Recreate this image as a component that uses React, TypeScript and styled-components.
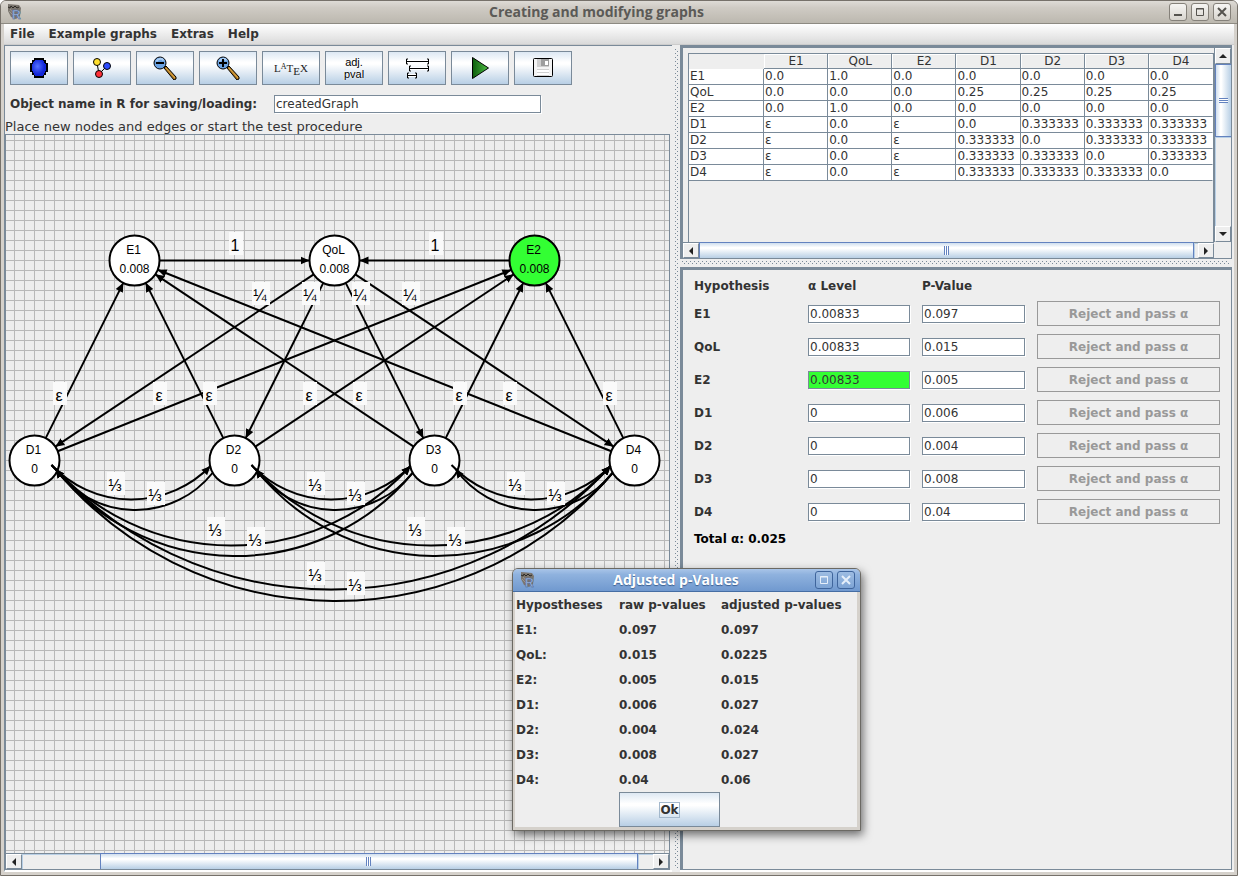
import React from "react";
import styled, { createGlobalStyle, css } from "styled-components";

const LINE = "#7a8a99";
const PANEL = "#eeeeee";
const INK = "#333333";
const buttonFace = "linear-gradient(#dde8f3 0%, #ffffff 32%, #ffffff 38%, #b8cfe5 100%)";

const GlobalStyle = createGlobalStyle`
  * { box-sizing: border-box; }
  body {
    margin: 0;
    background: #ffffff;
    color: ${INK};
    font: 12px/16px "DejaVu Sans", sans-serif;
  }
  button, input { font: inherit; color: inherit; }
`;

/* ---------- window frame ---------- */

const Frame = styled.div`
  position: relative;
  display: flex;
  flex-direction: column;
  min-height: 100vh;
  border: 1px solid #76716a;
  border-radius: 6px 6px 0 0;
  background: #d5d1cb;
`;

const TitleBar = styled.header`
  display: flex;
  align-items: center;
  height: 23px;
  padding: 0 6px 0 5px;
  border-bottom: 1px solid #8d8a82;
  border-radius: 5px 5px 0 0;
  background: linear-gradient(#dedbd6, #cfcbc4 30%, #bcb8af);
`;

const TitleText = styled.h1`
  flex: 1;
  margin: 0;
  text-align: center;
  font: bold 14px/20px "Open Sans", sans-serif;
  color: #5b5a57;
`;

const TitleButtons = styled.div`
  display: flex;
  gap: 4px;
`;

const TitleButton = styled.button`
  display: grid;
  place-items: center;
  width: 18px;
  height: 18px;
  padding: 0;
  border: 1px solid #85817a;
  border-radius: 3px;
  background: linear-gradient(#f6f5f3, #d8d5cf);
`;

const Body = styled.div`
  flex: 1;
  display: flex;
  flex-direction: column;
  margin: 0 3px 3px;
  background: ${PANEL};
`;

const MenuBar = styled.nav`
  display: flex;
  gap: 14px;
  height: 21px;
  padding: 0 6px;
  border-bottom: 1px solid #cccccc;
  background: linear-gradient(#ffffff, #dadada);
`;

const MenuItem = styled.button`
  padding: 0;
  border: 0;
  background: none;
  font-weight: bold;
  line-height: 19px;
`;

const Split = styled.main`
  flex: 1;
  display: grid;
  grid-template-columns: minmax(0, 668fr) 8px minmax(0, 554fr);
`;

const Divider = styled.div<{ $horizontal?: boolean }>`
  ${(p) => (p.$horizontal ? css`height: 8px; padding: 2px;` : css`padding: 4px 2px 4px 3px;`)}
  background:
    conic-gradient(from 270deg at 1px 1px, ${LINE} 90deg, transparent 0) 0 0 / 4px 4px content-box,
    conic-gradient(from 270deg at 1px 1px, ${LINE} 90deg, transparent 0) 2px 2px / 4px 4px content-box;
`;

/* ---------- left side ---------- */

const LeftPane = styled.section`
  display: flex;
  flex-direction: column;
  padding-right: 2px;
  border-top: 1px solid ${LINE};
  border-left: 1px solid ${LINE};
  border-bottom: 2px solid #ffffff;
`;

const Toolbar = styled.div`
  display: flex;
  gap: 5px;
  padding: 5px 5px 10px;
`;

const ToolButton = styled.button`
  display: grid;
  place-items: center;
  width: 58px;
  height: 34px;
  padding: 0;
  border: 1px solid ${LINE};
  background: ${buttonFace};
`;

const TwoLineCaption = styled.span`
  font: 11px/12px "Liberation Sans", sans-serif;
  color: #000000;
  text-shadow: 0 0 1px #ffffff, 0 0 2px #ffffff;
`;

const NameRow = styled.div`
  display: grid;
  grid-template-columns: 258px 267px;
  gap: 6px;
  padding: 0 5px 6px;
`;

const BoldLabel = styled.label`
  font-weight: bold;
  line-height: 18px;
  white-space: nowrap;
`;

const Field = styled.input<{ $rejectable?: boolean }>`
  width: 100%;
  height: 18px;
  padding: 0 1px;
  border: 1px solid ${LINE};
  border-radius: 0;
  background: ${(p) => (p.$rejectable ? "#33ff33" : "#ffffff")};
  box-shadow: 1px 1px 0 #ffffff;
`;

const Status = styled.p`
  margin: 0;
  font-size: 13px;
  line-height: 15px;
`;

const CanvasPane = styled.div`
  flex: 1;
  display: flex;
  flex-direction: column;
  border: 1px solid ${LINE};
`;

const Canvas = styled.div`
  flex: 1;
  min-height: 500px;
  overflow: hidden;
  background:
    linear-gradient(90deg, #b9b9b9 1px, transparent 1px) 8px 0 / 10px 10px,
    linear-gradient(#b9b9b9 1px, transparent 1px) 0 5px / 10px 10px,
    ${PANEL};
  svg { display: block; width: 100%; height: 100%; }
`;

/* ---------- scroll bars ---------- */

const Bar = styled.div<{ $vertical?: boolean }>`
  display: flex;
  flex-direction: ${(p) => (p.$vertical ? "column" : "row")};
  ${(p) => (p.$vertical ? css`border-left: 1px solid ${LINE};` : css`height: 16px; border-top: 1px solid ${LINE};`)}
  background: ${PANEL};
`;

const BarButton = styled.button`
  display: grid;
  place-items: center;
  flex: 0 0 16px;
  min-width: 0;
  padding: 0;
  border: 1px solid #ffffff;
  border-color: #ffffff ${LINE} ${LINE} #ffffff;
  background: ${PANEL};
`;

const Gap = styled.div<{ $grow: number }>`
  flex: ${(p) => p.$grow} 1 0;
  box-shadow: inset 1px 1px 0 #b8cfe5;
`;

const Thumb = styled.div<{ $grow: number; $vertical?: boolean }>`
  flex: ${(p) => p.$grow} 1 0;
  display: grid;
  place-items: center;
  border: 1px solid #6382bf;
  ${(p) =>
    p.$vertical
      ? css`border-right: 0; background: linear-gradient(90deg, #cfdeee, #ffffff 30%, #ffffff 36%, #b8cfe5);`
      : css`border-bottom: 0; margin-top: -1px; background: linear-gradient(#cfdeee, #ffffff 30%, #ffffff 36%, #b8cfe5);`}
`;

const Grip = styled.span<{ $vertical?: boolean }>`
  ${(p) => (p.$vertical ? css`width: 9px; height: 5px;` : css`width: 5px; height: 9px;`)}
  background: repeating-linear-gradient(${(p) => (p.$vertical ? "180deg" : "90deg")}, #6382bf 0 1px, #ffffff 1px 2px);
`;

type Direction = "left" | "right" | "up" | "down";
const arrowShapes: Record<Direction, string> = {
  left: "M6 0v8L2 4z",
  right: "M2 0v8l4-4z",
  up: "M0 6h8L4 2z",
  down: "M0 2h8L4 6z",
};

const Arrow = ({ to }: { to: Direction }) => (
  <svg width="8" height="8" aria-hidden="true">
    <path d={arrowShapes[to]} fill="#222" />
  </svg>
);

function ScrollBar({ vertical, parts }: { vertical?: boolean; parts: [number, number, number] }) {
  return (
    <Bar $vertical={vertical}>
      <BarButton aria-label={vertical ? "Scroll up" : "Scroll left"}>
        <Arrow to={vertical ? "up" : "left"} />
      </BarButton>
      <Gap $grow={parts[0]} />
      <Thumb $grow={parts[1]} $vertical={vertical}>
        <Grip $vertical={vertical} />
      </Thumb>
      <Gap $grow={parts[2]} />
      <BarButton aria-label={vertical ? "Scroll down" : "Scroll right"}>
        <Arrow to={vertical ? "down" : "right"} />
      </BarButton>
    </Bar>
  );
}

/* ---------- right side ---------- */

const RightPane = styled.div`
  display: flex;
  flex-direction: column;
  padding-right: 2px;
  border-bottom: 2px solid #ffffff;
`;

const MatrixPane = styled.section`
  display: grid;
  grid-template-columns: minmax(0, 1fr) 17px;
  grid-template-rows: 194px 16px;
  border: 1px solid ${LINE};
  border-width: 3px 1px 1px 3px;
`;

const MatrixView = styled.div`
  margin: 5px 0 0 5px;
  overflow: hidden;
  border: 1px solid ${LINE};
  border-width: 1px 1px 0 1px;
`;

const MatrixTable = styled.table`
  width: 100%;
  table-layout: fixed;
  border-collapse: separate;
  border-spacing: 0;
  th, td {
    height: 16px;
    padding: 0 0 0 1px;
    border-right: 1px solid ${LINE};
    border-bottom: 1px solid ${LINE};
    font-weight: normal;
    line-height: 15px;
    text-align: left;
    white-space: nowrap;
    overflow: hidden;
  }
  tbody th, td { background: #ffffff; }
  thead th { height: 15px; line-height: 14px; text-align: center; box-shadow: inset 1px 1px 0 #ffffff; }
  thead td { height: 15px; border-color: transparent; background: none; }
  th:last-child, td:last-child { border-right-color: transparent; }
`;

const FirstColumn = styled.col`
  width: 75px;
`;

const HypothesisPane = styled.section`
  flex: 1;
  padding: 4px 11px;
  border: 1px solid ${LINE};
  border-width: 3px 1px 1px 3px;
`;

const HypothesisRow = styled.div<{ $head?: boolean }>`
  display: grid;
  grid-template-columns: 102px 102px 103px minmax(0, 1fr);
  gap: 12px;
  align-items: center;
  height: ${(p) => (p.$head ? "23px" : "33px")};
  font-weight: ${(p) => (p.$head ? "bold" : "normal")};
`;

const RejectButton = styled.button`
  height: 25px;
  padding: 0;
  border: 1px solid #999999;
  background: ${PANEL};
  font-weight: bold;
  &:disabled { color: #999999; }
`;

const Total = styled.p`
  margin: 0;
  font-weight: bold;
  line-height: 23px;
  color: #000000;
`;

/* ---------- dialog ---------- */

const Dialog = styled.section`
  position: absolute;
  left: 511px;
  top: 567px;
  width: 349px;
  border: 1px solid #6b6963;
  border-radius: 6px 6px 0 0;
  background: #d5d1cb;
  box-shadow: 2px 4px 10px rgba(0, 0, 0, 0.55);
`;

const DialogTitle = styled.header`
  display: flex;
  align-items: center;
  height: 23px;
  padding: 0 5px 0 6px;
  border-bottom: 1px solid #456da3;
  border-radius: 5px 5px 0 0;
  background: linear-gradient(#a9c5e8, #8fb2de 25%, #7099cf);
`;

const DialogTitleText = styled.h2`
  flex: 1;
  margin: 0;
  text-align: center;
  font: bold 14px/20px "Open Sans", sans-serif;
  color: #ffffff;
  text-shadow: 0 1px 1px #3c5f90;
`;

const DialogButton = styled(TitleButton)`
  border-color: #3f659c;
  background: linear-gradient(#9dbce2, #7ea4d5);
`;

const DialogBody = styled.div`
  margin: 0 3px 3px 2px;
  background: ${PANEL};
`;

const ResultTable = styled.table`
  width: 100%;
  table-layout: fixed;
  border-collapse: collapse;
  th, td {
    height: 25px;
    padding: 0 1px;
    font-weight: bold;
    text-align: left;
    white-space: nowrap;
  }
`;

const ResultColumn = styled.col<{ $width?: number }>`
  width: ${(p) => (p.$width ? `${p.$width}px` : "auto")};
`;

const OkButton = styled.button`
  display: block;
  width: 101px;
  height: 35px;
  margin-left: 104px;
  border: 1px solid ${LINE};
  background: ${buttonFace};
  font-weight: bold;
  span { border: 1px solid #a3b8cc; }
`;

/* ---------- icons ---------- */

const AppIcon = () => (
  <svg width="18" height="18" viewBox="0 0 18 18" aria-hidden="true">
    <path d="M2 1l11 1 2 3-1 8-4 3-5-2-3-6z" fill="#7a756e" />
    <path d="M2 4l2 1 1-2 2 2 2-2 2 2 2-1" fill="none" stroke="#2c2925" />
    <path d="M3 8l5 5M4 6l6 7" stroke="#9a948c" />
    <text x="6" y="16" fontFamily="Liberation Sans, sans-serif" fontWeight="bold" fontSize="12" fill="#9db5dd" stroke="#46608f" strokeWidth="0.5">R</text>
  </svg>
);

const NodeIcon = () => (
  <svg width="20" height="22" viewBox="0 0 20 22" aria-hidden="true">
    <defs>
      <radialGradient id="blueBall" cx="40%" cy="40%">
        <stop offset="0" stopColor="#5572ff" />
        <stop offset="1" stopColor="#1226d8" />
      </radialGradient>
    </defs>
    <path d="M5 1h10v2h2v3h2v9h-2v3h-2v3H5v-3H3v-3H1V6h2V3h2z" fill="#000" />
    <path d="M6 3h8v1h1v2h1v1h1v7h-1v2h-1v2h-1v1H6v-1H5v-2H4v-2H3V7h1V5h1V4h1z" fill="url(#blueBall)" />
  </svg>
);

const EdgeIcon = () => (
  <svg width="24" height="24" viewBox="0 0 24 24" aria-hidden="true">
    <path d="M7 7l2 11 8-8" fill="none" stroke="#000" />
    <circle cx="7" cy="6" r="3.5" fill="#ffdf2e" stroke="#000" />
    <circle cx="17" cy="10" r="3.5" fill="#2d4cff" stroke="#000" />
    <circle cx="9" cy="18" r="3.5" fill="#ff3038" stroke="#000" />
  </svg>
);

const ZoomIcon = ({ plus }: { plus?: boolean }) => (
  <svg width="24" height="24" viewBox="0 0 24 24" aria-hidden="true">
    <path d="M11 12l2-2 10 11v2l-2 1z" fill="#b07a1e" stroke="#000" />
    <path d="M13 12l9 10" stroke="#e0ab4e" />
    <circle cx="7" cy="7" r="6" fill="#6ba3e3" stroke="#000" />
    <path d="M3.500 5.500a4 4 0 0 1 7-1" fill="none" stroke="#a9cdf4" strokeWidth="2" />
    <path d={plus ? "M3 7h8M7 3v8" : "M3 7h8"} stroke="#000" strokeWidth="2" />
  </svg>
);

const LatexIcon = () => (
  <svg width="34" height="22" viewBox="0 0 34 22" fontFamily="Liberation Serif, serif" fill="#222" aria-label="LaTeX">
    <text x="17" y="15" fontSize="11" textAnchor="middle">
      L<tspan fontSize="8" dy="-3">A</tspan><tspan dy="3">T</tspan><tspan dy="3">E</tspan><tspan dy="-3">X</tspan>
    </text>
  </svg>
);

const IntervalsIcon = () => (
  <svg width="24" height="22" viewBox="0 0 24 22" fill="none" aria-hidden="true">
    <g stroke="#fff" strokeWidth="3">
      <path d="M1 4.500h22M4 11.500h19M2 18.500h10" />
    </g>
    <path d="M3 2H1.500v5H3M22 2h1.500v5H22M2 4.500h21M6 9H4.500v5H6M22 9h1.500v5H22M5 11.500h18M4 16H2.500v5H4M10 16h1.500v5H10M3 18.500h8" stroke="#000" />
  </svg>
);

const PlayIcon = () => (
  <svg width="20" height="24" viewBox="0 0 20 24" aria-hidden="true">
    <defs>
      <linearGradient id="playFace">
        <stop offset="0" stopColor="#0b5c0b" />
        <stop offset="1" stopColor="#4fbf45" />
      </linearGradient>
    </defs>
    <path d="M2.500 1.500v21l16-10.500z" fill="url(#playFace)" stroke="#000" />
  </svg>
);

const DiskIcon = () => (
  <svg width="20" height="20" viewBox="0 0 20 20" aria-hidden="true">
    <rect x="0.500" y="0.500" width="19" height="18" rx="1" fill="#f4f4f4" stroke="#000" />
    <path d="M4 1h12v8H4z" fill="#cfcfcf" />
    <path d="M8 1h8v7H8z" fill="#9e9e9e" />
    <path d="M12 3h3v4h-3z" fill="#fff" />
    <path d="M4 11h12v7H4z" fill="#fff" />
    <path d="M4 11.500h12M4 14.500h12M4 17.500h12" stroke="#d0d0d0" />
  </svg>
);

const MinimizeGlyph = () => (
  <svg width="10" height="10" aria-hidden="true"><path d="M1 8h8" stroke="#55534f" strokeWidth="2" /></svg>
);
const MaximizeGlyph = ({ color = "#55534f" }: { color?: string }) => (
  <svg width="10" height="10" aria-hidden="true">
    <path d="M1.500 1.500h7v7h-7zM1 2h8" fill="none" stroke={color} />
  </svg>
);
const CloseGlyph = ({ color = "#55534f" }: { color?: string }) => (
  <svg width="10" height="10" aria-hidden="true"><path d="M1 1l8 8M9 1L1 9" stroke={color} strokeWidth="2" /></svg>
);

/* ---------- graph ---------- */

type Point = [number, number];

const nodes: Record<string, { at: Point; weight: string; rejectable?: boolean }> = {
  E1: { at: [128.5, 125.5], weight: "0.008" },
  QoL: { at: [328.5, 125.5], weight: "0.008" },
  E2: { at: [528.5, 125.5], weight: "0.008", rejectable: true },
  D1: { at: [28.5, 325.5], weight: "0" },
  D2: { at: [228.5, 325.5], weight: "0" },
  D3: { at: [428.5, 325.5], weight: "0" },
  D4: { at: [628.5, 325.5], weight: "0" },
};

/* from, to, label text, label centre */
const straightEdges: [string, string, string, number, number][] = [
  ["E1", "QoL", "1", 230, 109],
  ["E2", "QoL", "1", 430, 109],
  ["QoL", "D1", "¼", 255, 159],
  ["QoL", "D2", "¼", 305, 159],
  ["QoL", "D3", "¼", 355, 159],
  ["QoL", "D4", "¼", 405, 159],
  ["D1", "E1", "ε", 54, 259],
  ["D1", "E2", "ε", 154, 259],
  ["D2", "E1", "ε", 204, 259],
  ["D2", "E2", "ε", 304, 259],
  ["D3", "E1", "ε", 354, 259],
  ["D3", "E2", "ε", 454, 259],
  ["D4", "E1", "ε", 504, 259],
  ["D4", "E2", "ε", 604, 259],
];

const lower = ["D1", "D2", "D3", "D4"];
/* depth of the forward and backward arc for spans of one, two and three nodes */
const depths: Point[] = [[34, 39], [80, 85], [124, 130]];

const arcPairs = lower.flatMap((a, i) =>
  lower.slice(i + 1).map((b, k) => ({ a, b, depth: depths[k], left: nodes[a].at[0], right: nodes[b].at[0], span: k }))
);

function line(from: Point, to: Point) {
  const dx = to[0] - from[0];
  const dy = to[1] - from[1];
  const d = Math.hypot(dx, dy);
  const ux = (dx / d) * 25;
  const uy = (dy / d) * 25;
  return `M${from[0] + ux} ${from[1] + uy}L${to[0] - ux} ${to[1] - uy}`;
}

function arc(from: Point, to: Point, depth: number, sweep: number) {
  const half = Math.hypot(to[0] - from[0], to[1] - from[1]) / 2;
  const r = (half * half + depth * depth) / (2 * depth);
  return `M${from[0]} ${from[1]}A${r} ${r} 0 0 ${sweep} ${to[0]} ${to[1]}`;
}

const EdgeLabel = ({ text, x, y }: { text: string; x: number; y: number }) => {
  const w = text === "1" || text === "ε" ? 14 : 18;
  return (
    <g>
      <rect x={x - w / 2} y={y - 12} width={w} height="23" fill="#fafafa" />
      <text x={x - 1} y={y + 7} textAnchor="middle" fontSize="16">{text}</text>
    </g>
  );
};

const Graph = () => (
  <svg fontFamily="Liberation Sans, sans-serif" fill="#000" role="img" aria-label="Hypothesis graph">
    <defs>
      <marker id="head" markerUnits="userSpaceOnUse" markerWidth="9" markerHeight="9" refX="9" refY="4.500" orient="auto">
        <path d="M0 0.500L9 4.500L0 8.500z" />
      </marker>
    </defs>
    {Object.entries(nodes).map(([name, n]) => (
      <g key={name} textAnchor="middle" fontSize="12">
        <circle cx={n.at[0]} cy={n.at[1]} r="25" fill={n.rejectable ? "#33ff33" : "#ffffff"} stroke="#000" strokeWidth="2" />
        <text x={n.at[0] - 1} y={n.at[1] - 7}>{name}</text>
        <text x={n.at[0]} y={n.at[1] + 12}>{n.weight}</text>
      </g>
    ))}
    <g fill="none" stroke="#000" strokeWidth="2">
      {straightEdges.map(([a, b]) => (
        <path key={a + b} d={line(nodes[a].at, nodes[b].at)} markerEnd="url(#head)" />
      ))}
      {arcPairs.map(({ a, b, left, right, depth }) => (
        <g key={a + b}>
          <path d={arc([left + 17, 330], [right - 24, 331], depth[0], 0)} markerEnd="url(#head)" />
          <path d={arc([right - 22, 338], [left + 21, 334], depth[1], 1)} markerEnd="url(#head)" />
        </g>
      ))}
    </g>
    {straightEdges.map(([a, b, text, x, y]) => (
      <EdgeLabel key={a + b} text={text} x={x} y={y} />
    ))}
    {arcPairs.map(({ a, b, left, span }) => (
      <g key={a + b}>
        <EdgeLabel text="⅓" x={left + 81.5 + span * 100} y={349 + span * 45} />
        <EdgeLabel text="⅓" x={left + 121.5 + span * 100} y={359 + span * 45} />
      </g>
    ))}
  </svg>
);

/* ---------- data ---------- */

const third = "0.333333";
const names = ["E1", "QoL", "E2", "D1", "D2", "D3", "D4"];
const matrix = [
  ["0.0", "1.0", "0.0", "0.0", "0.0", "0.0", "0.0"],
  ["0.0", "0.0", "0.0", "0.25", "0.25", "0.25", "0.25"],
  ["0.0", "1.0", "0.0", "0.0", "0.0", "0.0", "0.0"],
  ["ε", "0.0", "ε", "0.0", third, third, third],
  ["ε", "0.0", "ε", third, "0.0", third, third],
  ["ε", "0.0", "ε", third, third, "0.0", third],
  ["ε", "0.0", "ε", third, third, third, "0.0"],
];
const hypotheses = [
  { name: "E1", alpha: "0.00833", p: "0.097", adjusted: "0.097" },
  { name: "QoL", alpha: "0.00833", p: "0.015", adjusted: "0.0225" },
  { name: "E2", alpha: "0.00833", p: "0.005", adjusted: "0.015" },
  { name: "D1", alpha: "0", p: "0.006", adjusted: "0.027" },
  { name: "D2", alpha: "0", p: "0.004", adjusted: "0.024" },
  { name: "D3", alpha: "0", p: "0.008", adjusted: "0.027" },
  { name: "D4", alpha: "0", p: "0.04", adjusted: "0.06" },
];

export default function App() {
  return (
    <>
      <GlobalStyle />
      <Frame>
        <TitleBar>
          <AppIcon />
          <TitleText>Creating and modifying graphs</TitleText>
          <TitleButtons>
            <TitleButton aria-label="Minimize"><MinimizeGlyph /></TitleButton>
            <TitleButton aria-label="Maximize"><MaximizeGlyph /></TitleButton>
            <TitleButton aria-label="Close"><CloseGlyph /></TitleButton>
          </TitleButtons>
        </TitleBar>
        <Body>
          <MenuBar>
            {["File", "Example graphs", "Extras", "Help"].map((m) => (
              <MenuItem key={m}>{m}</MenuItem>
            ))}
          </MenuBar>
          <Split>
            <LeftPane>
              <Toolbar>
                <ToolButton aria-label="New node"><NodeIcon /></ToolButton>
                <ToolButton aria-label="New edge"><EdgeIcon /></ToolButton>
                <ToolButton aria-label="Zoom out"><ZoomIcon /></ToolButton>
                <ToolButton aria-label="Zoom in"><ZoomIcon plus /></ToolButton>
                <ToolButton aria-label="LaTeX report"><LatexIcon /></ToolButton>
                <ToolButton><TwoLineCaption>adj.<br />pval</TwoLineCaption></ToolButton>
                <ToolButton aria-label="Confidence intervals"><IntervalsIcon /></ToolButton>
                <ToolButton aria-label="Start testing"><PlayIcon /></ToolButton>
                <ToolButton aria-label="Save"><DiskIcon /></ToolButton>
              </Toolbar>
              <NameRow>
                <BoldLabel htmlFor="objectName">Object name in R for saving/loading:</BoldLabel>
                <Field id="objectName" defaultValue="createdGraph" />
              </NameRow>
              <Status>Place new nodes and edges or start the test procedure</Status>
              <CanvasPane>
                <Canvas><Graph /></Canvas>
                <ScrollBar parts={[78, 538, 15]} />
              </CanvasPane>
            </LeftPane>
            <Divider />
            <RightPane>
              <MatrixPane>
                <MatrixView>
                  <MatrixTable>
                    <colgroup>
                      <FirstColumn />
                      {names.map((n) => <col key={n} />)}
                    </colgroup>
                    <thead>
                      <tr>
                        <td />
                        {names.map((n) => <th key={n} scope="col">{n}</th>)}
                      </tr>
                    </thead>
                    <tbody>
                      {matrix.map((row, i) => (
                        <tr key={names[i]}>
                          <th scope="row">{names[i]}</th>
                          {row.map((v, k) => <td key={names[k]}>{v}</td>)}
                        </tr>
                      ))}
                    </tbody>
                  </MatrixTable>
                </MatrixView>
                <ScrollBar vertical parts={[0, 72, 90]} />
                <ScrollBar parts={[0, 496, 4]} />
              </MatrixPane>
              <Divider $horizontal />
              <HypothesisPane>
                <HypothesisRow $head>
                  <span>Hypothesis</span>
                  <span>α Level</span>
                  <span>P-Value</span>
                </HypothesisRow>
                {hypotheses.map((h) => (
                  <HypothesisRow key={h.name}>
                    <BoldLabel htmlFor={`alpha-${h.name}`}>{h.name}</BoldLabel>
                    <Field id={`alpha-${h.name}`} defaultValue={h.alpha} $rejectable={h.name === "E2"} />
                    <Field aria-label={`P-Value of ${h.name}`} defaultValue={h.p} />
                    <RejectButton disabled>Reject and pass α</RejectButton>
                  </HypothesisRow>
                ))}
                <Total>Total α: 0.025</Total>
              </HypothesisPane>
            </RightPane>
          </Split>
        </Body>
        <Dialog role="dialog" aria-labelledby="dialogTitle">
          <DialogTitle>
            <AppIcon />
            <DialogTitleText id="dialogTitle">Adjusted p-Values</DialogTitleText>
            <TitleButtons>
              <DialogButton aria-label="Maximize"><MaximizeGlyph color="#e6effa" /></DialogButton>
              <DialogButton aria-label="Close"><CloseGlyph color="#e6effa" /></DialogButton>
            </TitleButtons>
          </DialogTitle>
          <DialogBody>
            <ResultTable>
              <colgroup>
                <ResultColumn $width={103} />
                <ResultColumn $width={102} />
                <ResultColumn />
              </colgroup>
              <thead>
                <tr>
                  <th scope="col">Hypostheses</th>
                  <th scope="col">raw p-values</th>
                  <th scope="col">adjusted p-values</th>
                </tr>
              </thead>
              <tbody>
                {hypotheses.map((h) => (
                  <tr key={h.name}>
                    <th scope="row">{h.name}:</th>
                    <td>{h.p}</td>
                    <td>{h.adjusted}</td>
                  </tr>
                ))}
              </tbody>
            </ResultTable>
            <OkButton><span>Ok</span></OkButton>
          </DialogBody>
        </Dialog>
      </Frame>
    </>
  );
}
